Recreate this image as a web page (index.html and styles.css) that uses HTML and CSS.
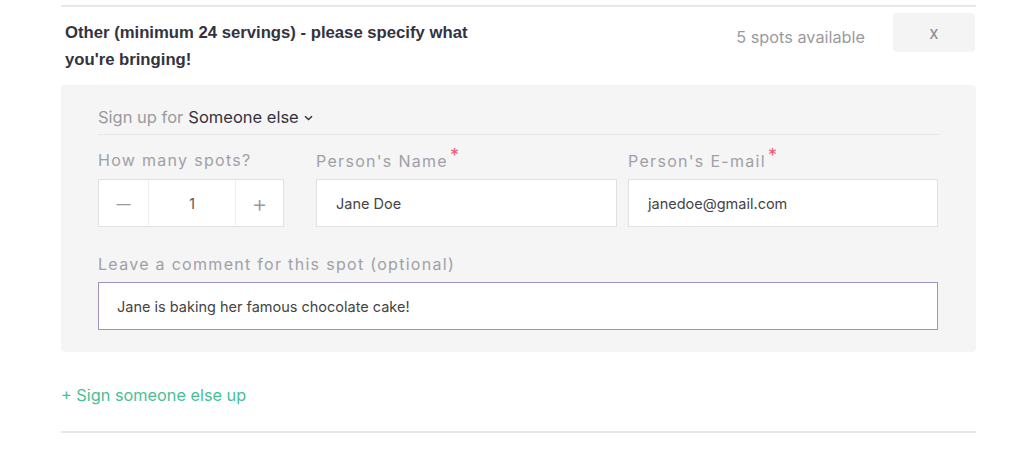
FILE: index.html
```html
<!DOCTYPE html>
<html>
<head>
<meta charset="utf-8">
<link rel="stylesheet" href="styles.css">
</head>
<body>
<div class="wrap">
  <div class="item">
    <div class="head">
      <div class="title">Other (minimum 24 servings) - please specify what you're bringing!</div>
      <div class="avail">5 spots available</div>
      <div class="close">x</div>
    </div>
    <div class="panel">
      <div class="signfor">Sign up for <span class="who">Someone else</span><svg class="chev" width="9" height="6" viewBox="0 0 9 6"><path d="M1 1.2 L4.5 4.6 L8 1.2" fill="none" stroke="#333" stroke-width="1.4"/></svg></div>
      <div class="row">
        <div class="field f-spots">
          <div class="label">How many spots?</div>
          <div class="stepper">
            <div class="step">&#8212;</div>
            <div class="num">1</div>
            <div class="step plus">+</div>
          </div>
        </div>
        <div class="field f-name">
          <div class="label">Person's Name<span class="req">*</span></div>
          <div class="input">Jane Doe</div>
        </div>
        <div class="field f-email">
          <div class="label">Person's E-mail<span class="req">*</span></div>
          <div class="input">janedoe@gmail.com</div>
        </div>
      </div>
      <div class="field f-comment">
        <div class="label">Leave a comment for this spot (optional)</div>
        <div class="input focus">Jane is baking her famous chocolate cake!</div>
      </div>
    </div>
    <div class="add">+ Sign someone else up</div>
  </div>
</div>
</body>
</html>
```
FILE: styles.css
```css
* { box-sizing: border-box; }
body { margin: 0; background: #fff; font-family: Inter, "Noto Sans", sans-serif; }
.wrap { padding: 5px 48px 0 61px; width: 1024px; }
.item { border-top: 2px solid #e6e6eb; border-bottom: 2px solid #e6e6eb; }
.head { display: flex; align-items: flex-start; padding-top: 6px; height: 78px; }
.title { font-family: "Liberation Sans", Arial, sans-serif; font-weight: bold; font-size: 16.7px; line-height: 27px; color: #33333f; width: 430px; padding-left: 4px; padding-top: 6px; }
.avail { margin-left: auto; font-size: 16.3px; color: #9a9a9f; padding-top: 14px; margin-right: 28px; }
.close { width: 82px; height: 39px; background: #f4f4f4; border-radius: 4px; display: flex; align-items: center; justify-content: center; color: #8a8a8f; font-size: 17px; margin-top: 0; margin-right: 1px; }
.panel { background: #f5f5f5; border-radius: 4px; padding: 22px 37px 22px 37px; }
.signfor { font-size: 16.5px; color: #9a9a9f; padding-bottom: 7px; border-bottom: 1px solid #e8e8ec; display: flex; align-items: center; }
.signfor .who { color: #333340; margin-left: 5px; }
.chev { margin-left: 5px; margin-top: 2px; }
.row { display: flex; margin-top: 15px; }
.field .label { font-size: 16px; color: #a09fa8; letter-spacing: 1.3px; height: 29px; }
.req { color: #f05a7a; position: relative; top: -5px; margin-left: 2px; font-size: 18px; }
.f-spots { width: 186px; margin-right: 32px; }
.f-name { width: 301px; margin-right: 11px; }
.f-email { width: 310px; }
.stepper { display: flex; height: 48px; background: #fff; border: 1px solid #e0e0e5; }
.step { width: 49px; display: flex; align-items: center; justify-content: center; color: #999; font-size: 14px; }
.step.plus { font-size: 24px; font-weight: 300; border-left: 1px solid #eee; width: 48px; }
.num { flex: 1; display: flex; align-items: center; justify-content: center; font-size: 14px; color: #555; border-left: 1px solid #eee; }
.input { height: 48px; background: #fff; border: 1px solid #e0e0e5; display: flex; align-items: center; padding-left: 19px; font-size: 14.5px; color: #444; }
.f-comment { margin-top: 27px; width: 840px; }
.f-comment .label { height: 28px; }
.input.focus { border-color: #a092bd; padding-left: 18px; }
.add { color: #45bf93; font-size: 16.3px; padding: 33px 0 26px 0; }
```
